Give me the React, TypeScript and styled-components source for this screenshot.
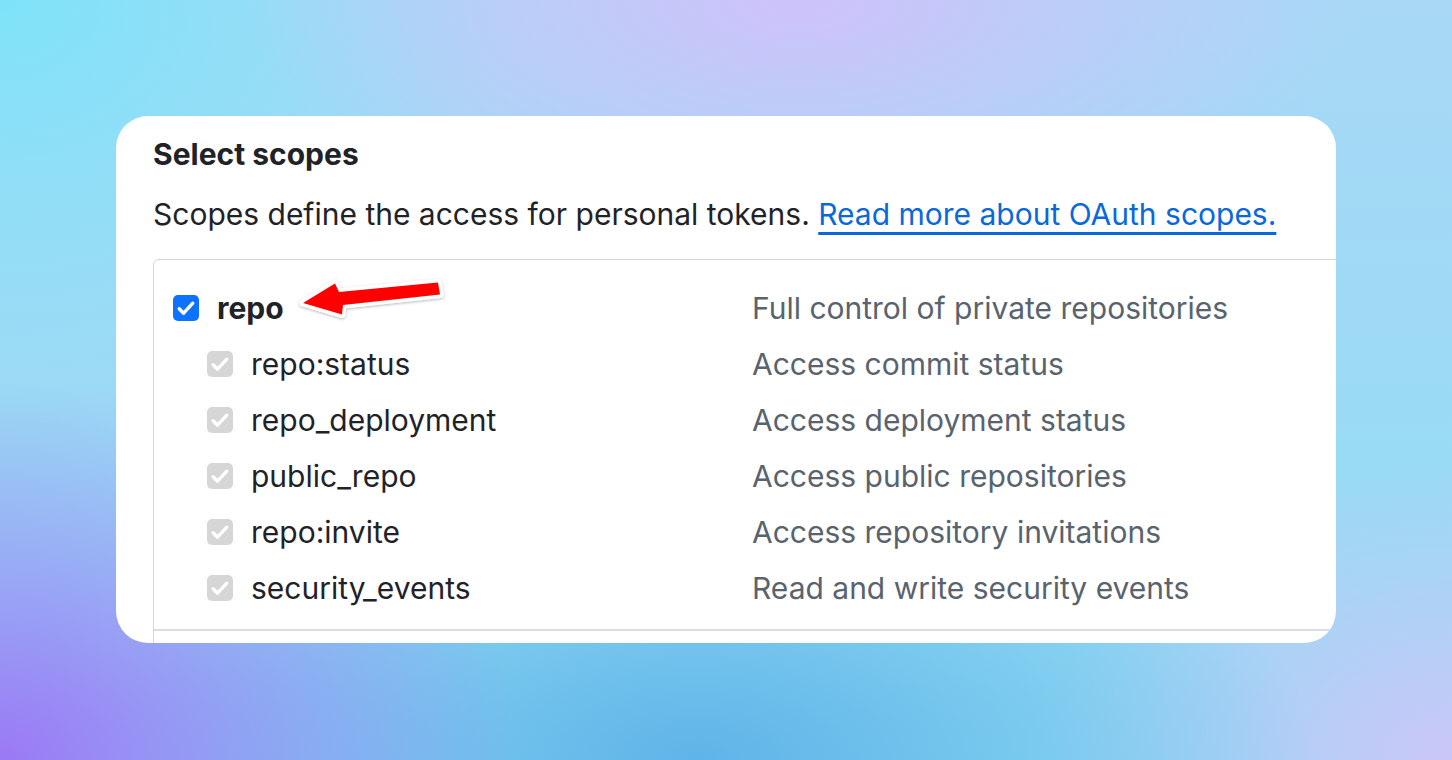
import styled, { createGlobalStyle } from 'styled-components';

const scopes = [
  { name: 'repo', description: 'Full control of private repositories', parent: true },
  { name: 'repo:status', description: 'Access commit status' },
  { name: 'repo_deployment', description: 'Access deployment status' },
  { name: 'public_repo', description: 'Access public repositories' },
  { name: 'repo:invite', description: 'Access repository invitations' },
  { name: 'security_events', description: 'Read and write security events' },
];

/**
 * 토큰 권한 선택 카드
 */
const App = () => {
  return (
    <>
      <GlobalStyle />
      <Page>
        <Card>
          <Title>Select scopes</Title>
          <Description>
            Scopes define the access for personal tokens. <Link href="#">Read more about OAuth scopes.</Link>
          </Description>

          <ScopeBox>
            <ScopeGroup>
              {scopes.map((scope) => (
                <ScopeRow key={scope.name}>
                  <ScopeLabel $child={!scope.parent}>
                    <Checkbox $disabled={!scope.parent}>
                      <CheckMark />
                    </Checkbox>
                    <ScopeName $bold={scope.parent}>{scope.name}</ScopeName>
                    {scope.parent && <Arrow />}
                  </ScopeLabel>
                  <ScopeDescription>{scope.description}</ScopeDescription>
                </ScopeRow>
              ))}
            </ScopeGroup>
          </ScopeBox>
        </Card>
      </Page>
    </>
  );
};

const CheckMark = () => (
  <svg width="26" height="26" viewBox="0 0 26 26">
    <path d="M6.2 13.8 10.6 18.2 19.8 8.2" fill="none" stroke="#fff" strokeWidth="3.4" strokeLinecap="round" strokeLinejoin="round" />
  </svg>
);

const Arrow = () => (
  <ArrowSvg width="150" height="50" viewBox="0 0 150 50">
    <defs>
      <filter id="arrow-shadow" x="-20%" y="-40%" width="140%" height="180%">
        <feDropShadow dx="0" dy="1" stdDeviation="1.8" floodColor="#000" floodOpacity="0.3" />
      </filter>
    </defs>
    <path
      d="M3 27 L35 7.5 L39 16 L138 6.5 L140 18.5 L43 29 L42 38.5 Z"
      fill="#ff0000"
      stroke="#fff"
      strokeWidth="7"
      strokeLinejoin="round"
      paintOrder="stroke"
      filter="url(#arrow-shadow)"
    />
  </ArrowSvg>
);

const GlobalStyle = createGlobalStyle`
  html,
  body {
    margin: 0;
    padding: 0;
  }

  body {
    font-family: Inter, 'Noto Sans', 'Liberation Sans', sans-serif;
  }
`;

const Page = styled.main`
  box-sizing: border-box;
  width: 1452px;
  height: 760px;
  padding: 116px 116px 0;
  overflow: hidden;
  background:
    radial-gradient(ellipse 520px 380px at 0% 100%, #9b78f5 0%, rgba(155, 120, 245, 0) 100%),
    radial-gradient(ellipse 620px 300px at 48% 100%, #5fb4e8 0%, rgba(95, 180, 232, 0) 100%),
    radial-gradient(ellipse 420px 300px at 100% 100%, #cbc6f8 0%, rgba(203, 198, 248, 0) 100%),
    radial-gradient(ellipse 560px 260px at 55% 0%, #cec2fa 0%, rgba(206, 194, 250, 0) 100%),
    radial-gradient(ellipse 500px 380px at 0% 0%, #7ee3f8 0%, rgba(126, 227, 248, 0) 100%),
    linear-gradient(180deg, #a8d8f6 0%, #8fdcf3 100%);
`;

const Card = styled.section`
  box-sizing: border-box;
  width: 1220px;
  height: 527px;
  padding: 20px 0 0 37px;
  overflow: hidden;
  background-color: #fff;
  border-radius: 32px;
`;

const Title = styled.h3`
  margin: 0 0 24px;
  font-size: 30px;
  font-weight: 700;
  line-height: 36px;
  color: #1f2328;
`;

const Description = styled.p`
  margin: 0 0 27px;
  font-size: 30px;
  line-height: 36px;
  color: #1f2328;
`;

const Link = styled.a`
  color: #0969da;
  text-decoration: underline;
  text-decoration-thickness: 3px;
  text-underline-offset: 7px;
`;

const ScopeBox = styled.div`
  box-sizing: border-box;
  width: 1300px;
  height: 420px;
  border: 1px solid #d0d7de;
  border-radius: 6px;
`;

const ScopeGroup = styled.div`
  padding: 20px 0 13px 19px;
  border-bottom: 2px solid #d8dee4;
`;

const ScopeRow = styled.div`
  display: grid;
  grid-template-columns: 579px 1fr;
  align-items: center;
  height: 56px;
`;

const ScopeLabel = styled.div<{ $child?: boolean }>`
  position: relative;
  display: flex;
  align-items: center;
  gap: 18px;
  height: 36px;
  padding-left: ${({ $child }) => ($child ? '34px' : '0')};
`;

const Checkbox = styled.span<{ $disabled?: boolean }>`
  display: flex;
  align-items: center;
  justify-content: center;
  width: 26px;
  height: 26px;
  border-radius: 5px;
  background-color: ${({ $disabled }) => ($disabled ? '#d6d6d6' : '#0d72ff')};
`;

const ScopeName = styled.span<{ $bold?: boolean }>`
  font-size: 30px;
  line-height: 36px;
  font-weight: ${({ $bold }) => ($bold ? 700 : 400)};
  color: #1f2328;
`;

const ScopeDescription = styled.span`
  font-size: 30px;
  line-height: 36px;
  color: #59636e;
`;

const ArrowSvg = styled.svg`
  position: absolute;
  top: -14px;
  left: 127px;
  overflow: visible;
`;

export default App;
